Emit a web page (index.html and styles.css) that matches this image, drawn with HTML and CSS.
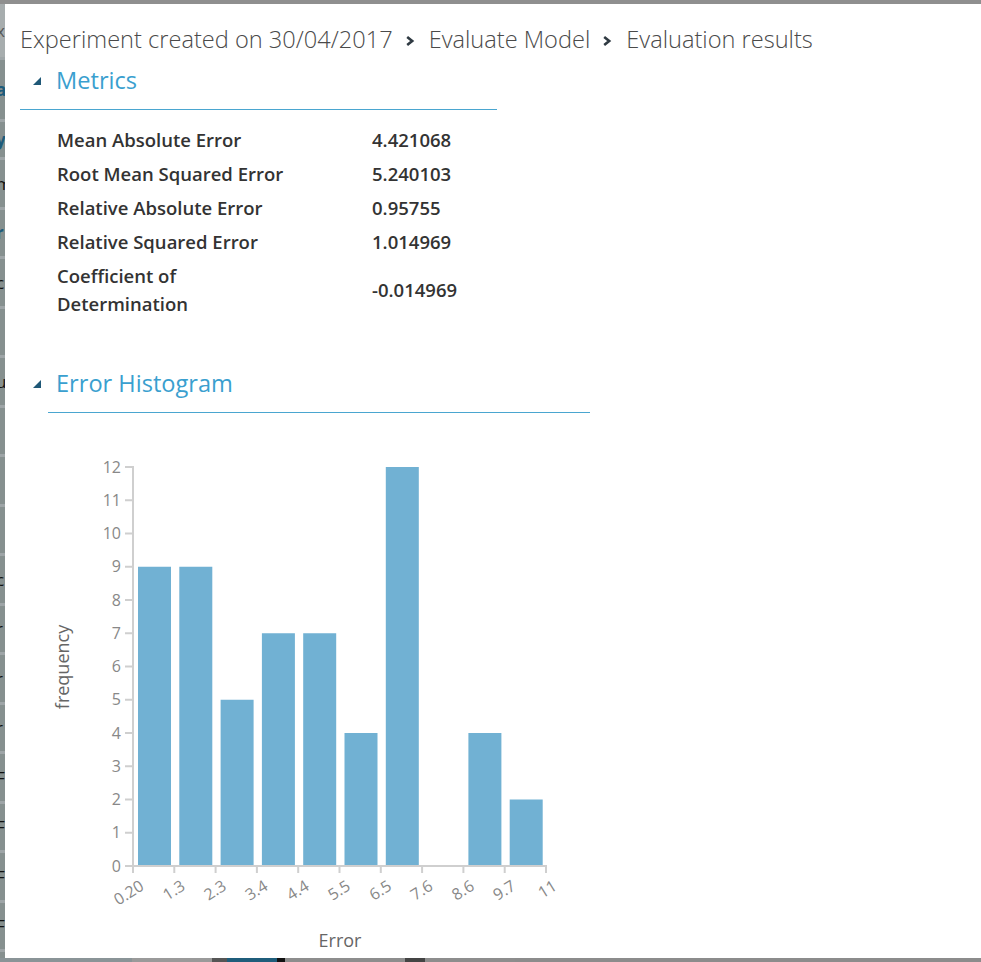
FILE: index.html
```html
<!DOCTYPE html>
<html lang="en">
<head>
<meta charset="utf-8">
<title>Evaluation results</title>
<link rel="stylesheet" href="styles.css">
</head>
<body>
<div class="backdrop">
  <div class="bd-top"></div>
  <div class="bd-side">
    <div class="bd-row bd-first"><span class="frag grey">x</span></div>
    <div class="bd-row bd-a"><span class="frag blue">a</span></div>
    <div class="bd-row bd-y"><span class="frag blue">y</span></div>
    <div class="bd-row"><span class="frag">m</span></div>
    <div class="bd-row"><span class="frag blue">r</span></div>
    <div class="bd-row"><span class="frag">c</span></div>
    <div class="bd-row"><span class="frag">i</span></div>
    <div class="bd-row"><span class="frag">u</span></div>
    <div class="bd-row"><span class="frag">i</span></div>
    <div class="bd-row"><span class="frag">i</span></div>
    <div class="bd-row"><span class="frag">l</span></div>
    <div class="bd-row"><span class="frag">c</span></div>
    <div class="bd-row"><span class="frag">r</span></div>
    <div class="bd-row"><span class="frag">r</span></div>
    <div class="bd-row"><span class="frag">r</span></div>
    <div class="bd-row"><span class="frag">F</span></div>
    <div class="bd-row"><span class="frag">F</span></div>
    <div class="bd-row"><span class="frag">F</span></div>
    <div class="bd-row"><span class="frag">F</span></div>
  </div>
  <div class="bd-bottom">
    <span class="bb b1"></span><span class="bb b2"></span><span class="bb b3"></span><span class="bb b4"></span><span class="bb b5"></span><span class="bb b6"></span><span class="bb b7"></span><span class="bb b8"></span>
  </div>
</div>

<div class="dialog">
  <header class="crumbs">
    <span class="crumb">Experiment created on 30/04/2017</span>
    <svg class="chev" viewBox="0 0 10 10" width="10" height="10"><path d="M2.2 1 L7.2 5 L2.2 9" fill="none" stroke="#2f3a42" stroke-width="2.6" stroke-linejoin="miter"/></svg>
    <span class="crumb">Evaluate Model</span>
    <svg class="chev" viewBox="0 0 10 10" width="10" height="10"><path d="M2.2 1 L7.2 5 L2.2 9" fill="none" stroke="#2f3a42" stroke-width="2.6" stroke-linejoin="miter"/></svg>
    <span class="crumb">Evaluation results</span>
  </header>

  <div class="scroll">
    <section class="sec sec-metrics">
      <h2 class="sec-title title-metrics"><svg class="tri" viewBox="0 0 8 8" width="8" height="8"><polygon points="8,0 8,8 0,8" fill="#1f5877"/></svg><span>Metrics</span></h2>
      <div class="mtable">
        <div class="mlabel">Mean Absolute Error</div><div class="mval">4.421068</div>
        <div class="mlabel">Root Mean Squared Error</div><div class="mval">5.240103</div>
        <div class="mlabel">Relative Absolute Error</div><div class="mval">0.95755</div>
        <div class="mlabel">Relative Squared Error</div><div class="mval">1.014969</div>
        <div class="mlabel">Coefficient of Determination</div><div class="mval">-0.014969</div>
      </div>
    </section>

    <section class="sec sec-hist">
      <h2 class="sec-title title-hist"><svg class="tri" viewBox="0 0 8 8" width="8" height="8"><polygon points="8,0 8,8 0,8" fill="#1f5877"/></svg><span>Error Histogram</span></h2>
      <svg class="chart" width="540" height="530" viewBox="0 0 540 530">
        <g class="bars" fill="#71b1d3">
          <rect x="90" y="136.75" width="33" height="299.25"/>
          <rect x="131.3" y="136.75" width="33" height="299.25"/>
          <rect x="172.6" y="269.75" width="33" height="166.25"/>
          <rect x="213.9" y="203.25" width="33" height="232.75"/>
          <rect x="255.2" y="203.25" width="33" height="232.75"/>
          <rect x="296.5" y="303" width="33" height="133"/>
          <rect x="337.8" y="37" width="33" height="399"/>
          <rect x="420.4" y="303" width="33" height="133"/>
          <rect x="461.7" y="369.5" width="33" height="66.5"/>
        </g>
        <g class="axis" stroke="#cfcfcf" stroke-width="2" fill="none">
          <path d="M77 37 H85 V436 H77"/>
          <path d="M77 402.75 H85 M77 369.5 H85 M77 336.25 H85 M77 303 H85 M77 269.75 H85 M77 236.5 H85 M77 203.25 H85 M77 170 H85 M77 136.75 H85 M77 103.5 H85 M77 70.25 H85"/>
          <path d="M85 443 V436 H498 V443"/>
          <path d="M126.3 436 V443 M167.6 436 V443 M208.9 436 V443 M250.2 436 V443 M291.5 436 V443 M332.8 436 V443 M374.1 436 V443 M415.4 436 V443 M456.7 436 V443"/>
        </g>
        <g class="ylab" text-anchor="end">
          <text x="73" y="441.5">0</text>
          <text x="73" y="408.25">1</text>
          <text x="73" y="375">2</text>
          <text x="73" y="341.75">3</text>
          <text x="73" y="308.5">4</text>
          <text x="73" y="275.25">5</text>
          <text x="73" y="242">6</text>
          <text x="73" y="208.75">7</text>
          <text x="73" y="175.5">8</text>
          <text x="73" y="142.25">9</text>
          <text x="73" y="109">10</text>
          <text x="73" y="75.75">11</text>
          <text x="73" y="42.5">12</text>
        </g>
        <g class="xlab" text-anchor="end">
          <text transform="translate(97 459) rotate(-32)">0.20</text>
          <text transform="translate(138.3 459) rotate(-32)">1.3</text>
          <text transform="translate(179.6 459) rotate(-32)">2.3</text>
          <text transform="translate(220.9 459) rotate(-32)">3.4</text>
          <text transform="translate(262.2 459) rotate(-32)">4.4</text>
          <text transform="translate(303.5 459) rotate(-32)">5.5</text>
          <text transform="translate(344.8 459) rotate(-32)">6.5</text>
          <text transform="translate(386.1 459) rotate(-32)">7.6</text>
          <text transform="translate(427.4 459) rotate(-32)">8.6</text>
          <text transform="translate(468.7 459) rotate(-32)">9.7</text>
          <text transform="translate(510 459) rotate(-32)">11</text>
        </g>
        <text class="axtitle" x="292" y="517" text-anchor="middle">Error</text>
        <text class="axtitle" transform="translate(21 237) rotate(-90)" text-anchor="middle">frequency</text>
      </svg>
    </section>
  </div>
</div>
</body>
</html>
```

FILE: styles.css
```css
* {
  box-sizing: border-box;
}

html,
body {
  margin: 0;
  padding: 0;
}

body {
  width: 981px;
  height: 962px;
  overflow: hidden;
  position: relative;
  background: #8a9497;
  font-family: "Open Sans", "Noto Sans", sans-serif;
}

/* ---------- backdrop behind the dialog ---------- */
.backdrop {
  height: 962px;
  display: flex;
  flex-direction: column;
}

.bd-top {
  height: 4px;
  background: #8f8f8f;
  flex: none;
}

.bd-side {
  flex: 1;
  display: flex;
  flex-direction: column;
  background: #86908f;
  overflow: hidden;
}

.bd-row {
  height: 49.5px;
  flex: none;
  display: flex;
  align-items: center;
  border-bottom: 3px solid #9ea5a7;
}

.bd-first {
  height: 56px;
  background: #a7adae;
}

.bd-a {
  height: 62px;
}

.bd-y {
  height: 38px;
}

.frag {
  font-size: 17px;
  color: #111;
  margin-left: -4px;
}

.frag.grey {
  color: #555;
}

.frag.blue {
  color: #1d5b7b;
  font-weight: 700;
}

.bd-bottom {
  height: 4px;
  flex: none;
  display: flex;
  background: #8c8c8c;
}

.bb {
  height: 4px;
  flex: none;
}

.b1 { width: 132px; background: #8a9497; }
.b2 { width: 80px; background: #9a9a9a; }
.b3 { width: 15px; background: #555; }
.b4 { width: 50px; background: #1f5d7b; }
.b5 { width: 8px; background: #111; }
.b6 { width: 120px; background: #8d8d8d; }
.b7 { width: 20px; background: #444; }
.b8 { width: 90px; background: #8d8d8d; }

/* ---------- dialog ---------- */
.dialog {
  position: absolute;
  left: 5px;
  top: 4px;
  width: 976px;
  height: 954px;
  background: #fff;
  display: flex;
  flex-direction: column;
  overflow: hidden;
}

.crumbs {
  flex: none;
  height: 68px;
  padding: 2px 0 0 15px;
  display: flex;
  align-items: center;
  color: #4a4a4a;
  font-weight: 300;
  font-size: 23.6px;
  white-space: nowrap;
}

.chev {
  margin: 3px 14px 0 12px;
  flex: none;
}

.scroll {
  flex: 1;
  overflow: hidden;
}

.sec-title {
  margin: 0;
  display: flex;
  align-items: center;
  font-weight: 400;
  font-size: 23.6px;
  color: #3a9fcf;
  border-bottom: 1px solid #4aa6d0;
  height: 51px;
  padding-bottom: 9px;
}

.title-metrics {
  margin-top: -13px;
  margin-left: 15px;
  width: 477px;
  padding-left: 13px;
}

.title-hist {
  margin-top: 41px;
  margin-left: 43px;
  width: 542px;
}

.tri {
  flex: none;
  margin-right: 15px;
  margin-top: 2px;
}

.title-hist .tri {
  margin-left: -15px;
}

.mtable {
  display: grid;
  grid-template-columns: 240px auto;
  column-gap: 75px;
  margin: 13px 0 0 52px;
  color: #333;
  font-size: 18.5px;
  font-weight: 600;
}

.mlabel,
.mval {
  padding: 3px 0;
  line-height: 28px;
  display: flex;
  align-items: center;
}

.chart {
  display: block;
  margin: 17px 0 0 43px;
  font-family: "Open Sans", "Noto Sans", sans-serif;
}

.ylab text,
.xlab text {
  font-size: 16px;
  fill: #888;
}

.axtitle {
  font-size: 18px;
  fill: #666;
}
```
